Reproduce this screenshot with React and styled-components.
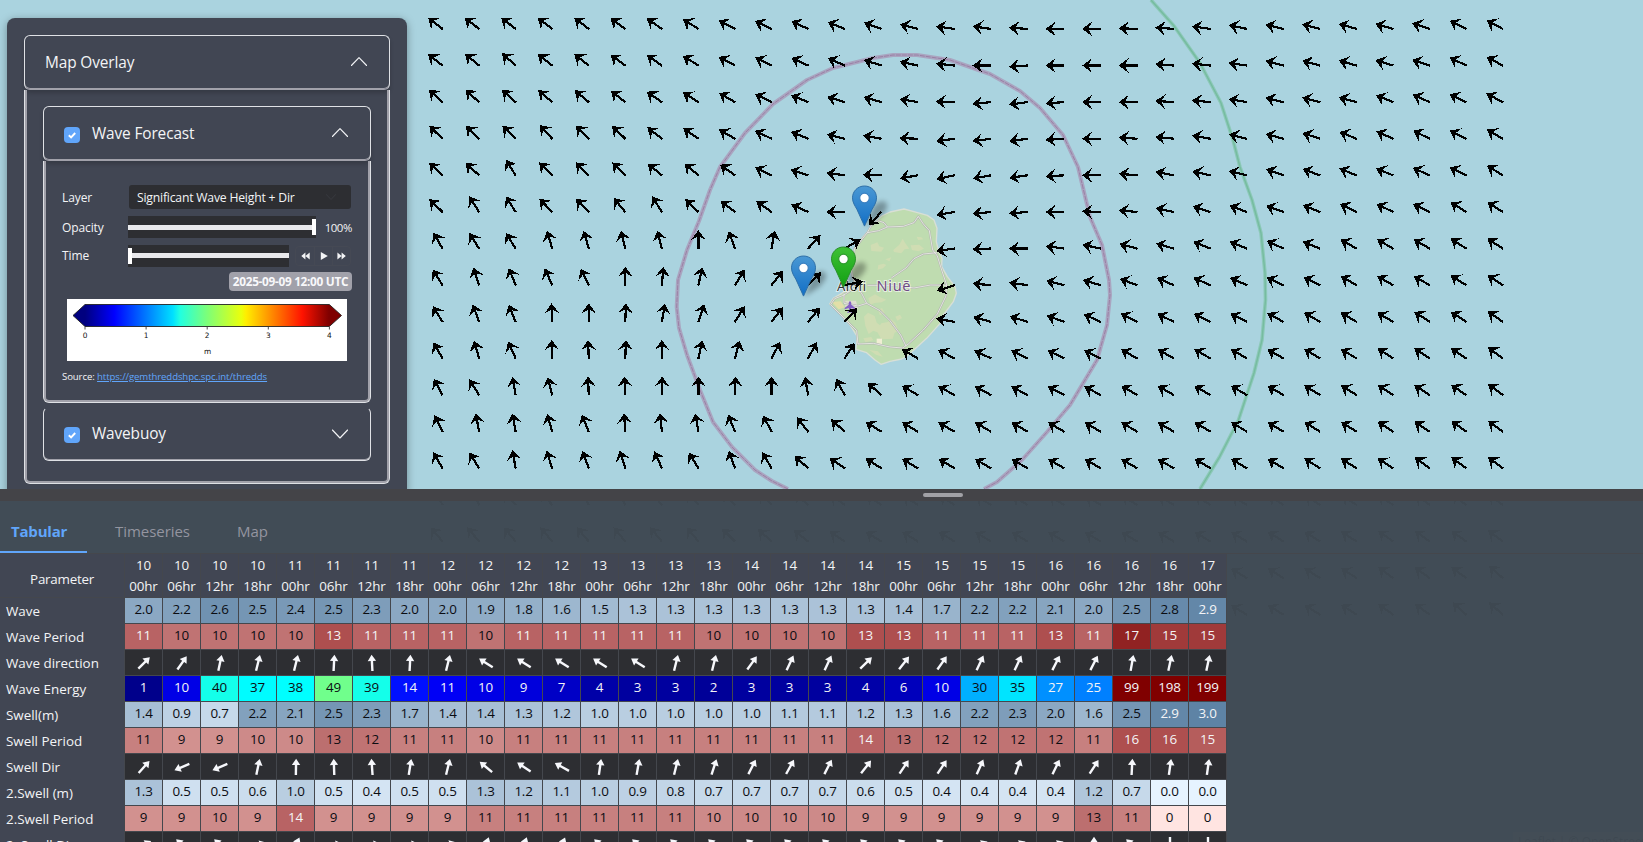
import React from "react";
import styled, { createGlobalStyle } from "styled-components";

const Global = createGlobalStyle`
  * { box-sizing: border-box; }
  body { margin: 0; background: #aad3df; overflow: hidden; }
`;

const text = "#f3f4f6";
const panel = "#414653";
const line = "#dfe1e5";
const lineSoft = "#a1a1aa";

const Page = styled.div`
  position: relative;
  display: flex;
  flex-direction: column;
  width: 100%;
  height: 842px;
  overflow: hidden;
  font-family: "Open Sans", "Noto Sans", sans-serif;
  color: ${text};
`;

const MapSvg = styled.svg`
  position: absolute;
  inset: 0;
  display: block;
`;

const Attribution = styled.div`
  position: absolute;
  right: -110px;
  bottom: -9px;
  padding: 0 5px;
  width: 240px;
  background: #fff;
  color: #000;
  font-size: 12px;
  line-height: 19px;
  white-space: nowrap;
`;

const MapArea = styled.div`
  position: relative;
  flex: 0 0 489px;
  overflow: hidden;
  padding: 18px 0 0 7px;
`;

const Card = styled.aside`
  width: 400px;
  height: 520px;
  padding: 17px;
  border-radius: 8px;
  background: ${panel};
  box-shadow: 0 2px 8px rgba(0, 0, 0, 0.35);
`;

const AccHeader = styled.div`
  display: flex;
  align-items: center;
  height: ${(p) => p.$h || 55}px;
  padding: 0 22px 1px 20px;
  border: 1px solid ${line};
  border-top-color: ${(p) => (p.$closed ? "transparent" : line)};
  border-bottom-color: ${(p) => (p.$closed ? line : lineSoft)};
  border-radius: 6px;
  box-shadow: ${(p) => (p.$closed ? `inset 0 -1px ${lineSoft}` : `inset 0 -1px ${lineSoft}, 0 3px 4px rgba(0,0,0,.18)`)};
  font-size: 15.4px;
  letter-spacing: -0.12px;
  svg { margin-left: auto; }
`;

const AccBody = styled.div`
  height: ${(p) => p.$h}px;
  padding: ${(p) => p.$pad};
  border: 1px solid ${line};
  border-top: 0;
  border-radius: 0 0 6px 6px;
  box-shadow: inset 2px 0 ${lineSoft}, inset -2px 0 ${lineSoft}, inset 0 -2px ${lineSoft};
`;

const Spacer = styled.div`
  height: 4px;
`;

const Check = styled.span`
  display: flex;
  align-items: center;
  justify-content: center;
  width: 16px;
  height: 16px;
  margin: 3px 12px 0 0;
  border-radius: 4px;
  background: #60a5fa;
  svg { margin: 0; }
`;

const Control = styled.div`
  display: flex;
  align-items: center;
  height: ${(p) => p.$h}px;
  font-size: 12px;
  letter-spacing: -0.1px;
`;

const ControlLabel = styled.label`
  flex: 0 0 66px;
`;

const Select = styled.div`
  display: flex;
  align-items: center;
  justify-content: space-between;
  width: 222px;
  height: 24px;
  margin-left: 1px;
  padding: 0 15px 0 8px;
  border-radius: 3px;
  background: #2d2e32;
  font-size: 12.2px;
  letter-spacing: -0.2px;
`;

const Slider = styled.div`
  display: flex;
  align-items: center;
  justify-content: ${(p) => (p.$end ? "flex-end" : "flex-start")};
  width: ${(p) => p.$w}px;
  height: 22px;
  background: linear-gradient(#e9e9ec, #e9e9ec) center / 100% 5px no-repeat, #2d2e32;
`;

const Thumb = styled.i`
  width: 4px;
  height: 16px;
  background: #fff;
`;

const Percent = styled.span`
  margin-left: auto;
  font-size: 11.4px;
  letter-spacing: -0.4px;
`;

const Player = styled.div`
  display: flex;
  margin-left: 6px;
  border: 1px solid #454954;
  border-radius: 4px;
  span { display: flex; align-items: center; justify-content: center; width: 18.1px; height: 18px; }
  span + span { border-left: 1px solid #454954; }
`;

const BadgeRow = styled.div`
  display: flex;
  justify-content: flex-end;
  margin-top: 4px;
`;

const Badge = styled.span`
  width: 123px;
  height: 19px;
  border-radius: 4px;
  background: ${lineSoft};
  color: #f8f8fa;
  font-size: 11.8px;
  font-weight: 700;
  line-height: 19px;
  text-align: center;
  letter-spacing: -0.3px;
  white-space: nowrap;
`;

const Legend = styled.svg`
  display: block;
  margin: 8px 0 0 5px;
  background: #fff;
`;

const Source = styled.div`
  margin-top: 9px;
  font-size: 9.6px;
  line-height: 14px;
  letter-spacing: -0.1px;
  a { color: #60a5fa; text-decoration: underline; }
`;

const Resizer = styled.div`
  position: relative;
  display: flex;
  flex: 0 0 12px;
  align-items: center;
  justify-content: center;
  padding-left: 243px;
  background: #444448;
`;

const Grip = styled.div`
  width: 40px;
  height: 4px;
  border-radius: 2px;
  background: #a1a1a6;
`;

const Sheet = styled.section`
  position: relative;
  flex: 1;
  min-height: 0;
  overflow: hidden;
  background: rgba(63, 73, 83, 0.98);
`;

const Tabs = styled.nav`
  display: flex;
  height: 53px;
  border-bottom: 1px solid #45474c;
`;

const Tab = styled.div`
  display: flex;
  align-items: center;
  width: ${(p) => p.$w}px;
  padding: 9px 0 0 ${(p) => p.$pl}px;
  border-bottom: 2px solid ${(p) => (p.$active ? "#60a5fa" : "transparent")};
  color: ${(p) => (p.$active ? "#60a5fa" : "#9495a0")};
  font-size: 15px;
  font-weight: ${(p) => (p.$active ? 700 : 400)};
  letter-spacing: ${(p) => (p.$active ? "-0.2px" : "-0.05px")};
`;

const Table = styled.div`
  display: grid;
  grid-template-columns: 124px repeat(29, 37px);
  grid-template-rows: 43px;
  grid-auto-rows: 25px;
  gap: 1px;
  width: 1227px;
  padding: 0 1px 0 0;
  background: #44474d;
  font-size: 13.4px;
`;

const ParamHead = styled.div`
  display: flex;
  align-items: center;
  justify-content: center;
  padding: 7px 0 0 0;
  background: ${panel};
  letter-spacing: -0.25px;
`;

const HourHead = styled.div`
  padding-top: 1px;
  background: ${panel};
  line-height: 21px;
  text-align: center;
  white-space: nowrap;
  letter-spacing: -0.15px;
`;

const RowLabel = styled.div`
  padding-left: 6px;
  background: ${panel};
  box-shadow: 0 1px ${panel};
  line-height: 26px;
  white-space: nowrap;
`;

const Cell = styled.div`
  background: ${(p) => p.$bg};
  color: ${(p) => (p.$light ? "#f3f4f6" : "#0b0d12")};
  line-height: 22px;
  text-align: center;
  letter-spacing: -0.2px;
`;

const ArrowCell = styled.div`
  display: flex;
  align-items: center;
  justify-content: center;
  background: #2d2e32;
`;

/* Wave field: degrees above due west, one row per latitude. null = land */
const N = null;
const FIELD = [
  [38,38,38,38,38,36,35,32,28,26,25,22,20,14,8,8,4,0,0,2,4,8,12,14,15,16,16,18,26,28],
  [38,40,42,38,38,36,35,32,28,26,25,24,18,12,6,0,-4,0,0,0,5,6,8,15,15,16,17,18,26,28],
  [42,42,42,40,40,38,35,32,30,26,22,17,16,10,2,-6,-8,-4,0,0,4,6,10,14,14,15,22,24,26,28],
  [44,44,44,48,46,44,38,35,30,26,22,14,10,2,-8,-8,-8,-4,0,4,6,10,14,15,18,22,24,26,26,30],
  [43,43,58,45,45,45,40,40,36,26,18,8,2,-10,-12,-10,-8,-3,0,5,11,13,14,20,20,22,22,24,26,32],
  [44,58,58,46,46,50,58,44,38,35,24,0,-48,N,-10,-6,-5,0,2,5,12,18,20,20,22,26,26,26,32,33],
  [60,58,58,74,74,76,76,90,70,100,133,150,N,N,-8,-2,0,8,12,15,16,22,22,25,22,30,30,30,33,33],
  [58,72,68,66,64,90,95,102,122,128,135,168,N,N,-18,5,8,14,16,20,24,24,24,25,26,30,30,30,32,34],
  [58,70,68,88,90,92,100,108,122,128,130,132,N,N,10,15,17,20,24,27,26,26,26,28,30,30,30,33,33,35],
  [60,74,66,88,88,92,90,102,105,118,118,122,N,30,28,26,26,26,26,29,30,30,30,30,31,31,33,33,34,37],
  [62,58,80,76,88,87,91,90,92,90,80,62,42,30,29,28,28,28,28,30,30,30,30,30,31,32,33,33,34,37],
  [64,80,80,74,68,86,84,80,68,62,52,42,32,31,30,30,30,30,30,30,30,31,31,31,32,32,33,33,36,37],
  [60,58,80,72,70,72,66,58,70,60,42,34,32,31,31,30,30,30,30,30,30,31,31,31,32,32,33,36,36,37],
  [62,62,48,48,62,62,50,45,45,45,40,36,33,32,32,31,31,31,31,31,31,31,31,32,32,33,33,36,36,37],
  [50,50,50,50,50,50,50,50,45,42,38,34,32,32,32,31,31,31,31,31,31,31,31,32,32,33,36,36,36,37],
  [50,50,50,50,50,50,50,50,45,42,38,34,32,32,32,31,31,31,31,31,31,31,31,32,32,33,36,36,36,42],
  [50,50,50,50,50,50,50,50,45,42,38,34,32,32,32,31,31,31,31,31,31,31,31,32,32,33,36,36,42,42],
];

const WaveField = () => (
  <g fill="#000" shapeRendering="crispEdges">
    {FIELD.map((row, r) =>
      row.map((deg, c) =>
        deg === null ? null : (
          <polygon
            key={`${r}-${c}`}
            points="0.4,-1.1 0.4,1.1 -11.8,1.1 -8.4,7.4 -18.4,0 -8.4,-7.4 -11.8,-1.1"
            transform={`translate(${442.5 + c * 36.56} ${28.9 + r * 36.61}) rotate(${deg})`}
          />
        )
      )
    )}
  </g>
);

const ZONE_INNER =
  "788,489 772,481 755,470 732,447 713,422 700,390 687,355 679,328 676.7,307 678,280 687,250 699,221 710,190 720,167 745,133 773,104 807,80 833,68 873,58 893,55 917,55 950,60 990,74 1020,91 1040,108 1063,135 1078,167 1090,217 1102,245 1109,280 1110,295 1107,325 1097,360 1070,405 1047,432 1022,460 997,482 984,489";
const ZONE_OUTER =
  "1151,0 1174,26 1200,63 1221,103 1233,140 1240,167 1252,200 1261,233 1265,273 1265.5,300 1262,340 1254,373 1238.5,420 1219.5,457 1200,489";
const COAST =
  "M625 182 L642 158 L665 138 L690 126 L732 117 L770 127 L802 136 L822 150 L831 175 L829 215 L835 240 L846 265 L845 290 L862 320 L885 350 L889 370 L880 395 L850 435 L845 455 L800 505 L745 555 L725 567 L690 574 L663 583 L645 570 L620 548 L588 538 L592 500 L570 465 L545 435 L509 402 L520 385 L545 370 L566 355 L590 345 L578 320 L570 290 L584 236 L605 205 Z";

const Island = () => (
  <g transform="translate(660 170) scale(.33333)" strokeLinejoin="round">
    <path d={COAST} fill="#bfdcb0" stroke="#d9dfd6" strokeWidth="4" />
    <g fill="#d0ddb3">
      <path d="M632 225l20-8 6 12 14 4-8 12-30-2zM700 240l18-16 10-18 8 14 12 16-14 2-10 12-22-4zM752 226l26-2 14 12-16 8-20-4zM770 200l14 2 6 6-16 2zM655 285l16-4 8 4-10 10-16 4zM676 268l18-6-6 12z" />
      <path d="M625 385l20-12 14 8 20 8-14 8-22 2-12 6zM612 440l12-12 20 10 6 20 16 12-10 18-16-6-14 10-10-24zM654 420l12-6 8 14-14 8zM664 460l20-4 8-10 14 12 10 24-12 6-6 18-34 2-14-26zM610 505l24-4 6 10-24 6zM706 440l14-6 6 10-14 8zM628 540l26 4 14 16-20-6z" />
      <path d="M516 396l26-2 12 18-18 6z" fill="#e3dfa8" />
      <path d="M556 392l32 0 6 24-20 6-18-12z" fill="#dfe0cf" />
    </g>
    <path d="M650 506h16v16h-16z" fill="#efeed3" />
    {[["#b3b7b0", 6], ["#f2f3ef", 2.2]].map(([c, w]) => (
      <g key={c} fill="none" stroke={c} strokeWidth={w}>
        <path d="M584 236L608 205L622 188L634 166L655 152L672 158L682 171L730 169L762 158L775 139L790 162L808 182L818 240L832 258L845 300L860 345L858 378L832 432L790 480L745 522L728 534L690 531L640 520L594 522L590 482L560 452L512 404L524 386L550 376L590 350L578 320L572 290Z" />
        <path d="M622 188L656 182L682 171" />
        <path d="M832 248L790 252L762 266L738 294L694 324" />
        <path d="M622 346L700 346L762 354L812 345L860 346" />
        <path d="M590 350L606 372L620 400L660 422L690 452L722 495L738 528M552 370L552 400L594 408L620 400" />
      </g>
    ))}
    <path
      d="M570 394c3 0 4 4 4 10l12 10v4l-12-4-1 8 5 4v3l-8-2-8 2v-3l5-4-1-8-12 4v-4l12-10c0-6 1-10 4-10z"
      fill="#8461c4"
    />
  </g>
);

const PIN =
  "M12.5 .5C5.7 .5 .5 5.8 .5 12.3c0 4.6 2.4 8 4.3 11.3L12.5 40.6l7.7-17c1.9-3.3 4.3-6.7 4.3-11.3C24.5 5.8 19.3 .5 12.5 .5z";

const Pin = ({ x, y, fill, edge, ring }) => (
  <g transform={`translate(${x - 12.5} ${y - 41})`}>
    <path d="M13 41L22 20Q32 12 35 19Q36 25 26 33Z" fill="#000" opacity=".3" filter="url(#soft)" />
    <path d={PIN} fill={`url(#${fill})`} stroke={edge} />
    <circle cx="12.5" cy="12.5" r="4.8" fill="#fff" stroke={ring} strokeWidth="1.2" />
  </g>
);

const MapCanvas = () => (
  <MapSvg width="1643" height="842" viewBox="0 0 1643 842">
    <defs>
      <linearGradient id="blue" x1="0" y1="0" x2="0" y2="1">
        <stop offset="0" stopColor="#4a98d4" />
        <stop offset="1" stopColor="#126fc6" />
      </linearGradient>
      <linearGradient id="green" x1="0" y1="0" x2="0" y2="1">
        <stop offset="0" stopColor="#3fc136" />
        <stop offset="1" stopColor="#12a012" />
      </linearGradient>
      <filter id="soft" x="-50%" y="-50%" width="200%" height="200%">
        <feGaussianBlur stdDeviation="2.8" />
      </filter>
    </defs>
    <rect width="1643" height="842" fill="#aad3df" />
    <polyline points={ZONE_OUTER} fill="none" stroke="#8cc9b8" strokeWidth="3.6" strokeLinejoin="round" />
    <polyline points={ZONE_OUTER} fill="none" stroke="#76bca0" strokeWidth="1.4" strokeLinejoin="round" />
    <polyline points={ZONE_INNER} fill="none" stroke="#a9a5c0" strokeWidth="4" strokeLinejoin="round" />
    <polyline points={ZONE_INNER} fill="none" stroke="#9c7fa5" strokeWidth="1" strokeDasharray="5 1" />
    <Island />
    <g fontFamily="'Noto Sans', sans-serif" stroke="#fff" strokeOpacity=".6" strokeWidth="2" paintOrder="stroke">
      <text x="837" y="291" fontSize="13" fill="#333" textLength="29">Alofi</text>
      <text x="876.5" y="291" fontSize="14.5" fill="#704d85" textLength="34">Niuē</text>
    </g>
    <WaveField />
    <Pin x={864.5} y={226.5} fill="blue" edge="#2e6fa8" ring="#3a7fc0" />
    <Pin x={843.5} y={287.5} fill="green" edge="#2a8f2a" ring="#2f9a2f" />
    <Pin x={803.5} y={296.5} fill="blue" edge="#2e6fa8" ring="#3a7fc0" />
  </MapSvg>
);

const Chevron = ({ down, size = 16, color = text }) => (
  <svg width={size} height={size} viewBox="0 0 16 16" fill="none" stroke={color} strokeWidth="1.15" strokeLinecap="round" strokeLinejoin="round">
    <path d={down ? "M.4 4L8 12L15.6 4" : "M.4 11.5L8 3.7L15.6 11.5"} />
  </svg>
);

const Tick = () => (
  <Check>
    <svg width="10" height="10" viewBox="0 0 10 10" fill="none" stroke="#fff" strokeWidth="1.9">
      <path d="M1.8 5.2L4.1 7.4L8.2 3" />
    </svg>
  </Check>
);

const JET = [
  [0, "#00007f"], [12, "#0000ff"], [36, "#00e0ff"], [39, "#22ffe0"], [50, "#7cff79"],
  [64, "#eaff0c"], [66, "#ffee00"], [89, "#ff1300"], [100, "#7f0000"],
];

const ColourBar = () => (
  <Legend width="280" height="62" viewBox="0 0 280 62">
    <defs>
      <linearGradient id="jet" gradientUnits="userSpaceOnUse" x1="18" x2="262" y1="0" y2="0">
        {JET.map(([o, c]) => (
          <stop key={o} offset={`${o}%`} stopColor={c} />
        ))}
      </linearGradient>
    </defs>
    <path d="M18 5.5H262.3L274.5 16.5L262.3 27.5H18L6 16.5Z" fill="url(#jet)" stroke="#222" strokeWidth=".9" />
    <g fontFamily="'DejaVu Sans', sans-serif" fontSize="7.4" fill="#111" textAnchor="middle">
      {[0, 1, 2, 3, 4].map((n) => (
        <g key={n}>
          <path d={`M${18 + n * 61.1} 28v2.5`} stroke="#222" strokeWidth=".8" />
          <text x={18 + n * 61.1} y="39">{n}</text>
        </g>
      ))}
      <text x="140.5" y="54.5">m</text>
    </g>
  </Legend>
);

const Back = () => (
  <svg width="9" height="8" viewBox="0 0 9 8" fill={text}><path d="M4.4 .4V7.6L.3 4zM8.7 .4V7.6L4.4 4z" /></svg>
);
const Play = () => (
  <svg width="8" height="8" viewBox="0 0 8 8" fill={text}><path d="M.8 0L7.8 4L.8 8z" /></svg>
);
const Forward = () => (
  <svg width="9" height="8" viewBox="0 0 9 8" fill={text}><path d="M.4 .4V7.6L4.6 4zM4.6 .4V7.6L8.8 4z" /></svg>
);

const height = (v) => {
  const t = v / 3;
  return { bg: `rgb(${Math.round(230 - 136 * t)},${Math.round(243 - 112 * t)},${Math.round(255 - 90 * t)})`, light: v > 2.8 };
};
const WAVE_PERIOD = { 10: "#c07373", 11: "#b86364", 13: "#ae4f4f", 15: "#a03a3a", 17: "#912222" };
const SWELL_PERIOD = { 0: "#ffe4e1", 9: "#d2918f", 10: "#cd8a89", 11: "#c7807f", 12: "#c07373", 13: "#bc6f6f", 14: "#b86364", 15: "#b55d5c", 16: "#ae4f4f" };
const ENERGY = {
  1: "#00008b", 2: "#000098", 3: "#00009f", 4: "#0000a8", 6: "#0000bc", 7: "#0000c6", 9: "#0000dc", 10: "#0000e6",
  11: "#0000f6", 14: "#0010ff", 25: "#0080ff", 27: "#0090ff", 30: "#00b0ff", 35: "#00e4ff", 37: "#00fcff", 38: "#00ffff",
  39: "#14ffea", 40: "#14ffea", 49: "#70ff8c", 99: "#800000", 198: "#800000", 199: "#800000",
};
const wavePeriod = (v) => ({ bg: WAVE_PERIOD[v], light: v > 10 });
const swellPeriod = (v) => ({ bg: SWELL_PERIOD[v], light: v > 13 });
const energy = (v) => ({ bg: ENERGY[v], light: v < 30 || v > 60 });

const ROWS = [
  { label: "Wave", tone: height, digits: 1, data: [2.0,2.2,2.6,2.5,2.4,2.5,2.3,2.0,2.0,1.9,1.8,1.6,1.5,1.3,1.3,1.3,1.3,1.3,1.3,1.3,1.4,1.7,2.2,2.2,2.1,2.0,2.5,2.8,2.9] },
  { label: "Wave Period", tone: wavePeriod, digits: 0, data: [11,10,10,10,10,13,11,11,11,10,11,11,11,11,11,10,10,10,10,13,13,11,11,11,13,11,17,15,15] },
  { label: "Wave direction", data: [45,35,12,14,14,3,-3,3,14,-57,-57,-57,-57,-57,14,14,36,25,25,46,38,35,25,25,27,27,10,12,12] },
  { label: "Wave Energy", tone: energy, digits: 0, data: [1,10,40,37,38,49,39,14,11,10,9,7,4,3,3,2,3,3,3,4,6,10,30,35,27,25,99,198,199] },
  { label: "Swell(m)", tone: height, digits: 1, data: [1.4,0.9,0.7,2.2,2.1,2.5,2.3,1.7,1.4,1.4,1.3,1.2,1.0,1.0,1.0,1.0,1.0,1.1,1.1,1.2,1.3,1.6,2.2,2.3,2.0,1.6,2.5,2.9,3.0] },
  { label: "Swell Period", tone: swellPeriod, digits: 0, data: [11,9,9,10,10,13,12,11,11,10,11,11,11,11,11,11,11,11,11,14,13,12,12,12,12,11,16,16,15] },
  { label: "Swell Dir", data: [42,-113,-113,12,1,-2,-4,9,14,-50,-56,-61,8,10,14,18,27,29,27,38,34,34,24,20,26,33,3,8,8] },
  { label: "2.Swell (m)", tone: height, digits: 1, data: [1.3,0.5,0.5,0.6,1.0,0.5,0.4,0.5,0.5,1.3,1.2,1.1,1.0,0.9,0.8,0.7,0.7,0.7,0.7,0.6,0.5,0.4,0.4,0.4,0.4,1.2,0.7,0,0] },
  { label: "2.Swell Period", tone: swellPeriod, digits: 0, data: [9,9,10,9,14,9,9,9,9,11,11,11,11,11,11,10,10,10,10,9,9,9,9,9,9,13,11,0,0] },
  { label: "2. Swell Dir", data: [60,-45,-45,72,25,80,80,80,70,20,20,22,-45,-45,-45,-45,-45,-45,-45,-45,-45,-45,65,65,65,0,-45,180,180] },
];

const HOURS = ["00hr", "06hr", "12hr", "18hr"];
const COLUMNS = Array.from({ length: 29 }, (_, i) => ({ day: 10 + Math.floor(i / 4), hour: HOURS[i % 4] }));

const Direction = ({ deg }) => (
  <svg width="18" height="18" viewBox="-9 -9 18 18">
    <path d="M0 -8.2L4.2 -2H1.2V8H-1.2V-2H-4.2Z" fill="#f6f7fb" transform={`rotate(${deg})`} />
  </svg>
);

const ForecastTable = () => (
  <Table>
    <ParamHead>Parameter</ParamHead>
    {COLUMNS.map((c) => (
      <HourHead key={`${c.day}${c.hour}`}>
        {c.day}
        <br />
        {c.hour}
      </HourHead>
    ))}
    {ROWS.map((row) => (
      <React.Fragment key={row.label}>
        <RowLabel>{row.label}</RowLabel>
        {row.data.map((v, i) => {
          if (!row.tone) {
            return (
              <ArrowCell key={i}>
                <Direction deg={v} />
              </ArrowCell>
            );
          }
          const { bg, light } = row.tone(v);
          return (
            <Cell key={i} $bg={bg} $light={light}>
              {v.toFixed(row.digits)}
            </Cell>
          );
        })}
      </React.Fragment>
    ))}
  </Table>
);

export default function App() {
  return (
    <Page>
      <Global />
      <MapCanvas />
      <Attribution>Leaflet | © OpenStreetMap contributors</Attribution>
      <MapArea>
        <Card>
          <AccHeader>
            Map Overlay
            <Chevron />
          </AccHeader>
          <AccBody $h={394} $pad="16px 18px">
            <AccHeader>
              <Tick />
              Wave Forecast
              <Chevron />
            </AccHeader>
            <AccBody $h={242} $pad="22px 18px 0 18px">
              <Control $h={28}>
                <ControlLabel>Layer</ControlLabel>
                <Select>
                  Significant Wave Height + Dir
                  <Chevron down size={10} color="#3d3f45" />
                </Select>
              </Control>
              <Control $h={32}>
                <ControlLabel>Opacity</ControlLabel>
                <Slider $w={188} $end>
                  <Thumb />
                </Slider>
                <Percent>100%</Percent>
              </Control>
              <Control $h={25}>
                <ControlLabel>Time</ControlLabel>
                <Slider $w={161}>
                  <Thumb />
                </Slider>
                <Player>
                  <span><Back /></span>
                  <span><Play /></span>
                  <span><Forward /></span>
                </Player>
              </Control>
              <BadgeRow>
                <Badge>2025-09-09 12:00 UTC</Badge>
              </BadgeRow>
              <ColourBar />
              <Source>
                Source: <a>https://gemthreddshpc.spc.int/thredds</a>
              </Source>
            </AccBody>
            <Spacer />
            <AccHeader $h={54} $closed>
              <Tick />
              Wavebuoy
              <Chevron down />
            </AccHeader>
          </AccBody>
        </Card>
      </MapArea>
      <Resizer>
        <Grip />
      </Resizer>
      <Sheet>
        <Tabs>
          <Tab $active $w={87} $pl={11}>Tabular</Tab>
          <Tab $w={122} $pl={28}>Timeseries</Tab>
          <Tab $w={90} $pl={28}>Map</Tab>
        </Tabs>
        <ForecastTable />
      </Sheet>
    </Page>
  );
}
